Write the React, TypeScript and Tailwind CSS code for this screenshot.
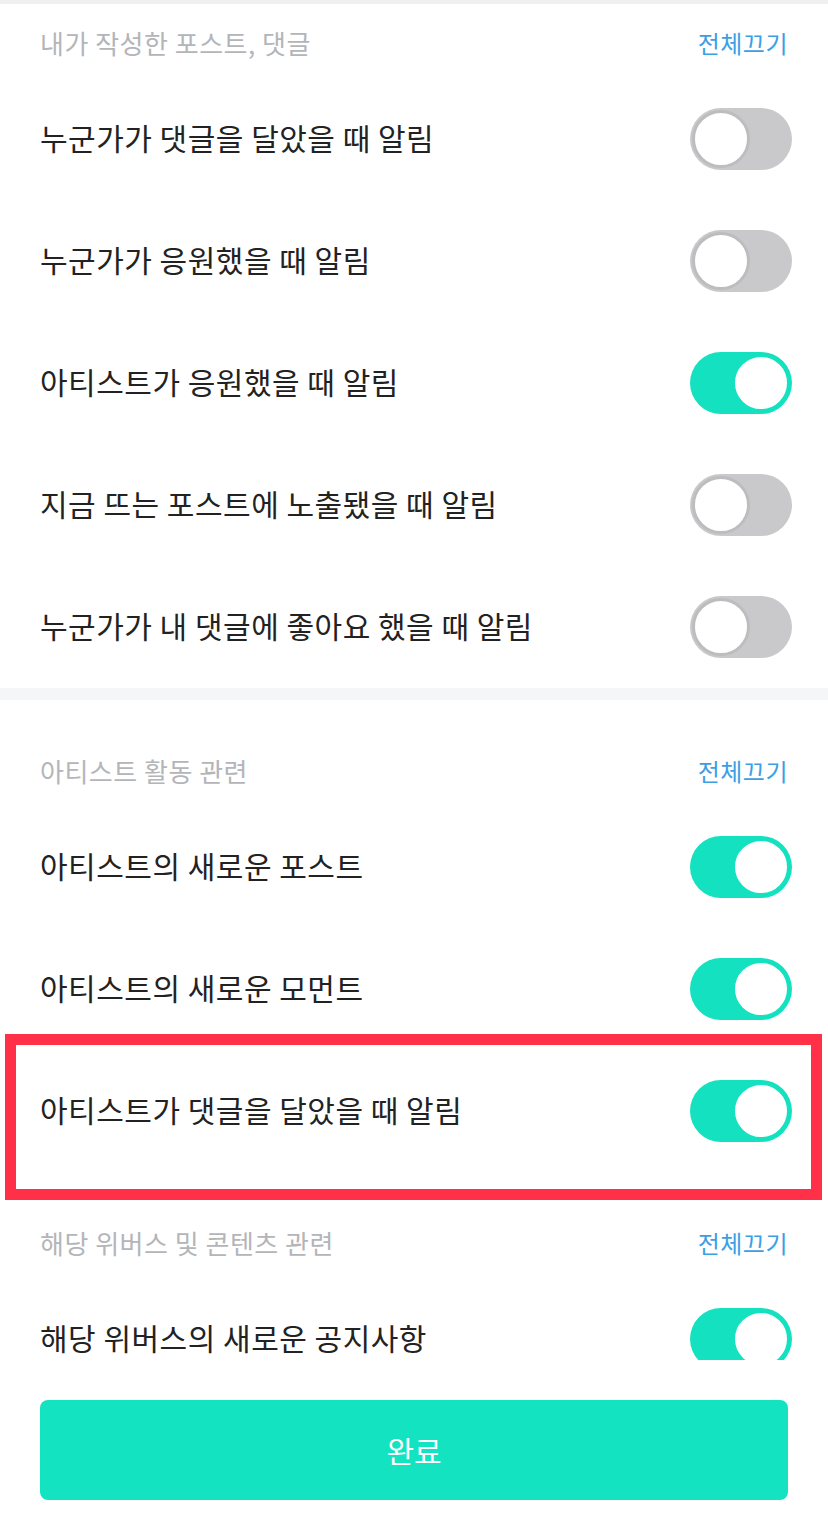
const font = { fontFamily: '"Noto Sans CJK KR", "Noto Sans", sans-serif' }

type Item = { label: string; on: boolean }

const sections: { title: string; items: Item[] }[] = [
  {
    title: "내가 작성한 포스트, 댓글",
    items: [
      { label: "누군가가 댓글을 달았을 때 알림", on: false },
      { label: "누군가가 응원했을 때 알림", on: false },
      { label: "아티스트가 응원했을 때 알림", on: true },
      { label: "지금 뜨는 포스트에 노출됐을 때 알림", on: false },
      { label: "누군가가 내 댓글에 좋아요 했을 때 알림", on: false },
    ],
  },
  {
    title: "아티스트 활동 관련",
    items: [
      { label: "아티스트의 새로운 포스트", on: true },
      { label: "아티스트의 새로운 모먼트", on: true },
      { label: "아티스트가 댓글을 달았을 때 알림", on: true },
    ],
  },
  {
    title: "해당 위버스 및 콘텐츠 관련",
    items: [{ label: "해당 위버스의 새로운 공지사항", on: true }],
  },
]

const Toggle = ({ on }: { on: boolean }) => (
  <div
    className={
      on
        ? "flex h-[62px] w-[102px] items-center justify-end rounded-full bg-[#14e1bf] px-[2px]"
        : "flex h-[62px] w-[102px] items-center justify-start rounded-full bg-[#c9c9cb] px-[2px]"
    }
  >
    <div
      className={
        on
          ? "h-[58px] w-[58px] rounded-full border-[3px] border-[#14e1bf] bg-white"
          : "h-[58px] w-[58px] rounded-full border-[3px] border-[#bdbdbf] bg-white"
      }
    />
  </div>
)

const Header = ({ title, first }: { title: string; first: boolean }) => (
  <div
    className={
      first
        ? "flex h-[74px] items-start justify-between px-[40px] pt-[19px]"
        : "flex h-[106px] items-start justify-between px-[40px] pt-[51px]"
    }
  >
    <span className="text-[26px] leading-[40px] tracking-[0.5px] text-[#b3b5b9]">{title}</span>
    <span className="text-[24px] leading-[40px] tracking-[0.5px] text-[#3d9fe3]">전체끄기</span>
  </div>
)

export default function App() {
  return (
    <div style={font} className="relative flex h-[1540px] w-[828px] flex-col overflow-hidden bg-white">
      <div className="h-[4px] bg-[#eff0f2]" />
      <div className="relative h-[1356px] overflow-hidden">
        {sections.map((s, i) => (
          <div key={s.title}>
            {i === 1 && <div className="h-[12px] bg-[#f5f6f8]" />}
            <Header title={s.title} first={i === 0} />
            {s.items.map((it) => (
              <div key={it.label} className="flex h-[122px] items-center justify-between pl-[40px] pr-[36px]">
                <span className="-mt-[3px] text-[30px] tracking-[0.5px] text-[#222222]">{it.label}</span>
                <Toggle on={it.on} />
              </div>
            ))}
          </div>
        ))}
        {/* annotation box */}
        <div className="absolute left-[5px] top-[1030px] h-[166px] w-[817px] border-[11px] border-[#ff3048]" />
      </div>
      <div className="px-[40px] pt-[40px]">
        <button className="flex h-[100px] w-full items-center justify-center rounded-[8px] bg-[#14e3c1] text-[30px] text-white">
          완료
        </button>
      </div>
    </div>
  )
}
